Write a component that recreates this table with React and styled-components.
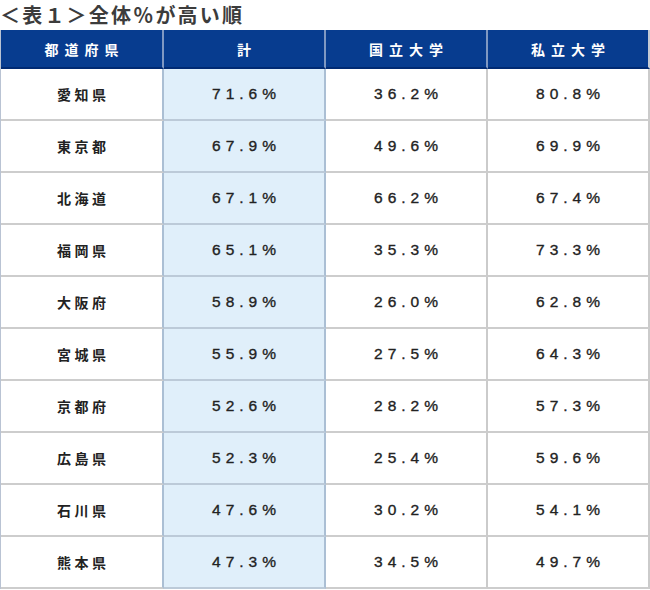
import React from "react";
import styled, { createGlobalStyle } from "styled-components";

const GlobalStyle = createGlobalStyle`
  html, body { margin: 0; padding: 0; background: #ffffff; }
  body { font-family: "Noto Sans CJK JP", "Noto Sans", sans-serif; }
`;

const Page = styled.div`
  width: 650px;
  display: flex;
  flex-direction: column;
`;

const Title = styled.h2`
  margin: 0;
  height: 30px;
  font-family: "Noto Sans CJK JP", sans-serif;
  font-size: 20px;
  font-weight: 700;
  line-height: 29px;
  letter-spacing: 2.2px;
  color: #3c3c3c;
  white-space: nowrap;
`;

const Grid = styled.div`
  width: 649px;
  display: grid;
  grid-template-columns: 163px 162px 162px 162px;
  border-left: 1px solid #b9c3d3;
  box-sizing: border-box;
`;

const HeadCell = styled.div`
  height: 39px;
  box-sizing: border-box;
  background: #073c8f;
  border-right: 2px solid ${(p) => (p.$last ? "#c4cad4" : "#7f98c2")};
  border-bottom: 2px solid #002a73;
  display: flex;
  align-items: center;
  justify-content: center;
  color: #ffffff;
  font-family: "Noto Sans CJK JP", sans-serif;
  font-weight: 700;
  font-size: 14px;
  letter-spacing: 6px;
  padding-left: 6px;
`;

const Cell = styled.div`
  height: 52px;
  box-sizing: border-box;
  background: ${(p) => (p.$hl ? "#e0effa" : "#ffffff")};
  border-right: 2px solid ${(p) => (p.$hl || p.$beforeHl ? "#abbfd4" : "#cbcbcb")};
  border-bottom: 2px solid ${(p) => (p.$hl ? "#bccad8" : "#cdcdcd")};
  display: flex;
  align-items: center;
  justify-content: center;
  color: #222222;
`;

const PrefText = styled.span`
  font-family: "Noto Sans CJK JP", sans-serif;
  font-weight: 700;
  font-size: 14px;
  letter-spacing: 3.5px;
  padding-left: 3.5px;
`;

const NumText = styled.span`
  font-family: "Liberation Sans", Arial, sans-serif;
  font-weight: 400;
  font-size: 15.5px;
  letter-spacing: 5px;
  padding-left: 5px;
  -webkit-text-stroke: 0.35px #222;
`;

const headers = ["都道府県", "計", "国立大学", "私立大学"];

const rows = [
  ["愛知県", "71.6%", "36.2%", "80.8%"],
  ["東京都", "67.9%", "49.6%", "69.9%"],
  ["北海道", "67.1%", "66.2%", "67.4%"],
  ["福岡県", "65.1%", "35.3%", "73.3%"],
  ["大阪府", "58.9%", "26.0%", "62.8%"],
  ["宮城県", "55.9%", "27.5%", "64.3%"],
  ["京都府", "52.6%", "28.2%", "57.3%"],
  ["広島県", "52.3%", "25.4%", "59.6%"],
  ["石川県", "47.6%", "30.2%", "54.1%"],
  ["熊本県", "47.3%", "34.5%", "49.7%"],
];

export default function App() {
  return (
    <Page>
      <GlobalStyle />
      <Title>＜表１＞全体％が高い順</Title>
      <Grid>
        {headers.map((h, i) => (
          <HeadCell key={h} $last={i === headers.length - 1}>
            {h}
          </HeadCell>
        ))}
        {rows.map((r) => (
          <React.Fragment key={r[0]}>
            <Cell $beforeHl>
              <PrefText>{r[0]}</PrefText>
            </Cell>
            <Cell $hl>
              <NumText>{r[1]}</NumText>
            </Cell>
            <Cell>
              <NumText>{r[2]}</NumText>
            </Cell>
            <Cell>
              <NumText>{r[3]}</NumText>
            </Cell>
          </React.Fragment>
        ))}
      </Grid>
    </Page>
  );
}
